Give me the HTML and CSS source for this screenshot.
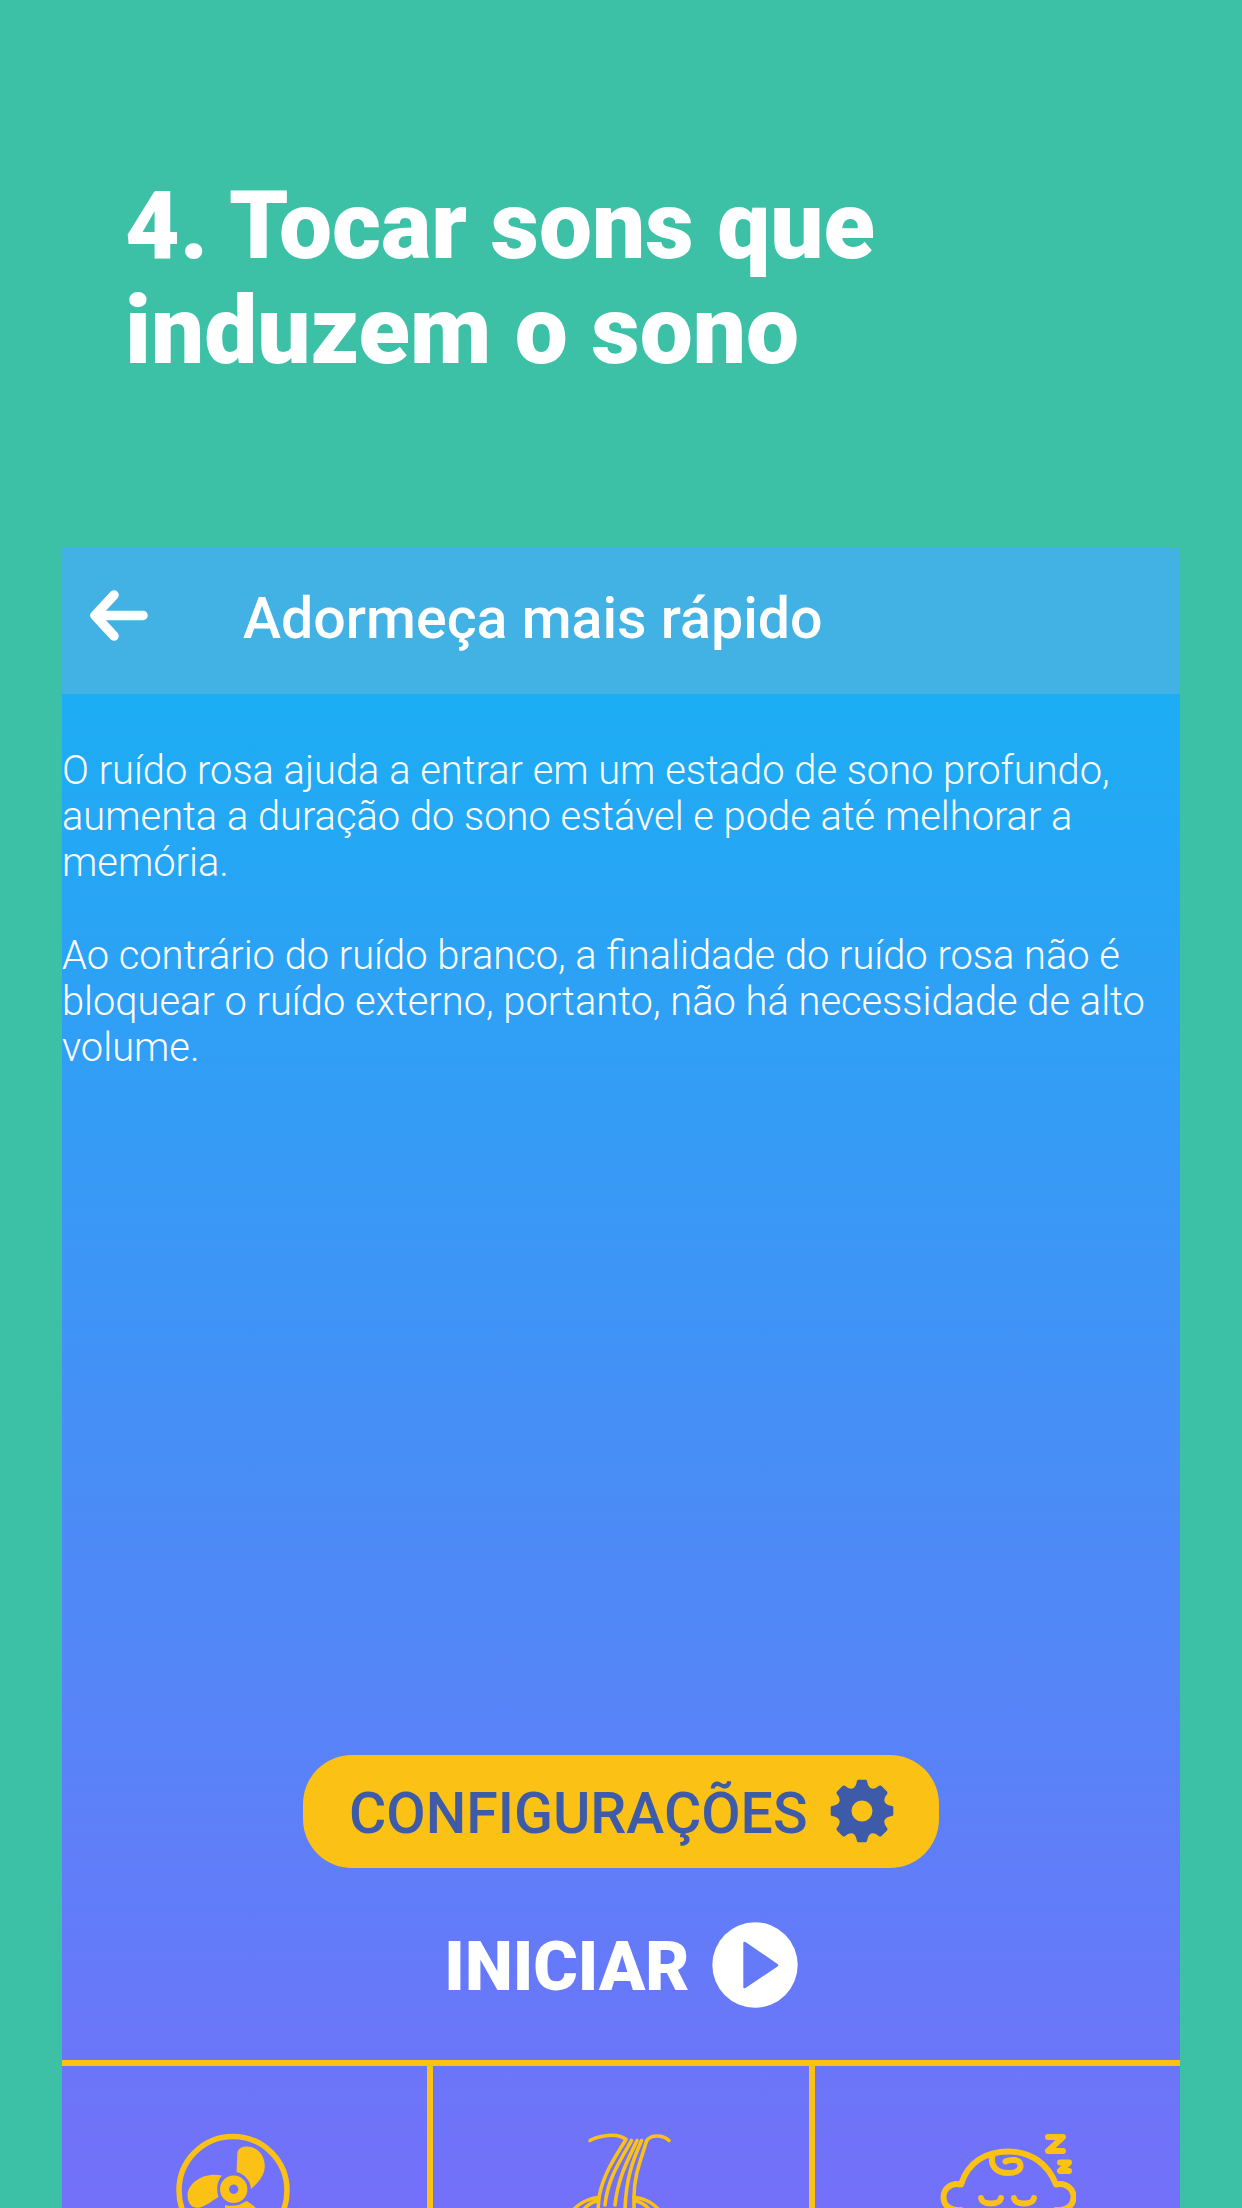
FILE: index.html
```html
<!DOCTYPE html>
<html lang="pt">
<head>
    <meta charset="UTF-8">
    <meta name="viewport" content="width=device-width, initial-scale=1.0">
    <title>Adormeça mais rápido</title>
    <link rel="stylesheet" href="styles.css">
</head>
<body>

<h1 class="headline">4. Tocar sons que<br>induzem o sono</h1>

<div class="screen">
    <header class="topbar">
        <svg class="back" viewBox="0 0 58 52">
            <path d="M24 5 L5 25.500 L24 46" />
            <path d="M6 25.500 H53" />
        </svg>
        <h2>Adormeça mais rápido</h2>
    </header>

    <div class="text">
        <p>O ruído rosa ajuda a entrar em um estado de sono profundo,<br>aumenta a duração do sono estável e pode até melhorar a<br>memória.</p>
        <p>Ao contrário do ruído branco, a finalidade do ruído rosa não é<br>bloquear o ruído externo, portanto, não há necessidade de alto<br>volume.</p>
    </div>

    <div class="actions">
        <button class="settings">
            <span>CONFIGURAÇÕES</span>
            <svg class="gear" viewBox="-32 -32 64 64">
                <path fill-rule="evenodd" d="M-4-31.300H4Q5-31 5.300-29C6-25 8-22.300 11-22.300Q14-22.300 17-25.200Q18.500-26 19.500-25L25-19.500Q26-18.500 25.200-17Q22.300-14 22.300-11C22.300-8 25-6 29-5.300Q31-5 31.300-4V4Q31 5 29 5.300C25 6 22.300 8 22.300 11Q22.300 14 25.200 17Q26 18.500 25 19.500L19.500 25Q18.500 26 17 25.200Q14 22.300 11 22.300C8 22.300 6 25 5.300 29Q5 31 4 31.300H-4Q-5 31-5.300 29C-6 25-8 22.300-11 22.300Q-14 22.300-17 25.200Q-18.500 26-19.500 25L-25 19.500Q-26 18.500-25.200 17Q-22.300 14-22.300 11C-22.300 8-25 6-29 5.300Q-31 5-31.300 4V-4Q-31-5-29-5.300C-25-6-22.300-8-22.300-11Q-22.300-14-25.200-17Q-26-18.500-25-19.500L-19.500-25Q-18.500-26-17-25.200Q-14-22.300-11-22.300C-8-22.300-6-25-5.300-29Q-5-31-4-31.300ZM0-10.500A10.500 10.500 0 1 0 0 10.500A10.500 10.500 0 1 0 0-10.500Z" />
            </svg>
        </button>
        <button class="start">
            <span>INICIAR</span>
            <svg class="play" viewBox="0 0 86 86">
                <path fill-rule="evenodd" d="M43 .3A42.700 42.700 0 1 0 43 85.700A42.700 42.700 0 1 0 43 .3ZM31.300 21Q31.300 19 33.500 20L65.500 42Q67 43 65.500 44.500L33.500 66Q31.300 67 31.300 65Z" />
            </svg>
        </button>
    </div>

    <nav class="sounds">
        <div class="sound">
            <!-- fan -->
            <svg class="icon fan" viewBox="176 2133 114 114">
                <circle class="line" cx="233" cy="2190.500" r="54" />
                <circle class="hub" cx="233.700" cy="2189.300" r="9.200" />
                <path d="M236.600 2172L237.300 2154C237.500 2149 241 2146.500 247 2146.500C257 2146.500 264.800 2155 264.800 2166C264.800 2175 259 2182 251 2189C250.500 2181 245 2174.500 236.600 2172Z" />
                <path d="M222 2175.500C205 2171.500 188 2182 187.500 2195C187.500 2205 193.500 2209 200 2207.500C206 2206 211 2201.500 218.500 2197C216 2189 217 2181 222 2175.500Z" />
                <path d="M225 2205C232 2207 240 2205.500 246.500 2201C255 2206 262 2212 261 2221C257 2235 238 2236 230 2228C226 2222 225 2213 225 2205Z" />
            </svg>
        </div>
        <div class="sound">
            <!-- waterfall -->
            <svg class="icon fall" viewBox="570 2133 104 114">
                <path d="M590 2140.500C598 2136 617 2132 626 2139.500C613 2160 603 2176 599 2197L598 2210" />
                <path d="M669 2140.500C663 2135 651 2134 646.500 2141C641 2160 634 2175 634 2197V2210" />
                <path d="M631.500 2140.500C620 2161 608 2178 605 2205" />
                <path d="M637 2140.500C627 2162 618 2178 615 2205" />
                <path d="M641.500 2140.500C633 2160 626 2178 625 2210" />
                <path d="M599 2197.500C588 2198 576 2205 570 2214M598 2201C590 2202 584 2208 580 2215M634 2197.500C646 2198 656 2205 662 2214M635 2201C643 2202 649 2208 653 2215" />
            </svg>
        </div>
        <div class="sound">
            <!-- sleeping baby -->
            <svg class="icon baby" viewBox="940 2133 136 114">
                <path d="M961 2184.500C968 2162 986 2151.500 1008.500 2151.500C1031 2151.500 1048 2164 1056 2184.500C1066 2182 1073.500 2189 1073.500 2197C1073.500 2206 1066 2211 1056 2210C1048 2232 1030 2242 1008 2242C986 2242 968 2232 961 2210C951 2211 943.500 2206 943.500 2197C943.500 2189 951 2182 961 2184.500Z" />
                <path d="M993 2154C989 2166 997 2173 1008 2173C1018 2173 1021 2169 1020.500 2165C1020 2159 1011 2159 1005.500 2161.500" />
                <path d="M981 2198C982 2203 986 2203.500 991 2203.500C996 2203.500 1000 2203 1001 2198M1014 2198C1015 2203 1019 2203.500 1024 2203.500C1029 2203.500 1033 2203 1034 2198" />
                <path d="M1048 2137H1063L1048 2151H1063M1060 2162.500H1069L1060 2171H1069" />
            </svg>
        </div>
    </nav>
</div>

</body>
</html>
```
FILE: styles.css
```css
* {
    box-sizing: border-box;
}
body {
    font-family: Roboto, "Liberation Sans", sans-serif;
    margin: 0;
    height: 2208px;
    overflow: hidden;
    background-color: #3cc1a7;
    color: white;
    display: flex;
    flex-direction: column;
}
.headline {
    height: 548px;
    flex: none;
    margin: 0;
    padding: 173px 125px 0;
    font-size: 94.400px;
    font-weight: 900;
    line-height: 105px;
}
.screen {
    width: 1118px;
    height: 1660px;
    margin-left: 62px;
    flex: none;
    display: flex;
    flex-direction: column;
    overflow: hidden;
    background: linear-gradient(#1aaff2 0, #1cadf4 146px, #7370f9 1660px);
}
.topbar {
    height: 146px;
    flex: none;
    padding: 0 0 6px 28px;
    display: flex;
    align-items: center;
    gap: 95px;
    background-color: #42b1e4;
}
.topbar h2 {
    margin: 0;
    font-size: 57.300px;
    font-weight: 500;
}
.back {
    width: 58px;
    height: 52px;
    margin-top: -5px;
    fill: none;
    stroke: white;
    stroke-width: 9.500px;
    stroke-linecap: round;
    stroke-linejoin: round;
}
.text {
    padding: 53.500px 0 0;
    font-size: 39.850px;
    font-weight: 300;
    line-height: 46.300px;
    white-space: nowrap;
}
.text p {
    margin: 0 0 46.300px;
}
.actions {
    margin-top: auto;
    display: flex;
    flex-direction: column;
    align-items: center;
    gap: 54px;
}
button {
    padding: 0;
    border: none;
    background: none;
    font-family: inherit;
    color: white;
    display: flex;
    align-items: center;
}
button span {
    padding-top: 4px;
}
.settings {
    width: 636px;
    height: 113px;
    padding-left: 46px;
    border-radius: 49px;
    background-color: #fbc115;
    color: #3e5ba9;
    font-size: 57.200px;
    font-weight: 500;
    gap: 22px;
}
.gear {
    width: 64px;
    height: 64px;
    margin-top: -1px;
    fill: #3e5ba9;
}
.start {
    height: 86px;
    font-size: 68px;
    font-weight: 900;
    gap: 22px;
}
.play {
    width: 86px;
    height: 86px;
    fill: white;
}
.sounds {
    height: 148px;
    flex: none;
    margin-top: 52px;
    display: grid;
    grid-template-columns: 371px 382px 365px;
    border-top: 6px solid #fbc115;
}
.sound {
    padding-top: 67px;
    border-right: 6px solid #fbc115;
}
.sound:last-child {
    border-right: none;
}
.icon {
    display: block;
    height: 114px;
    fill: none;
    stroke: #fbc115;
    stroke-width: 5.500px;
    stroke-linecap: round;
    stroke-linejoin: round;
}
.fan {
    width: 114px;
    margin-left: 114px;
    fill: #fbc115;
    stroke: none;
}
.fan .line, .fan .hub {
    fill: none;
    stroke: #fbc115;
    stroke-width: 5.500px;
}
.fan .hub {
    stroke-width: 9px;
}
.fall {
    width: 104px;
    margin-left: 137px;
    stroke-width: 3.600px;
}
.baby {
    width: 136px;
    margin-left: 125px;
    stroke-width: 6px;
}
```
